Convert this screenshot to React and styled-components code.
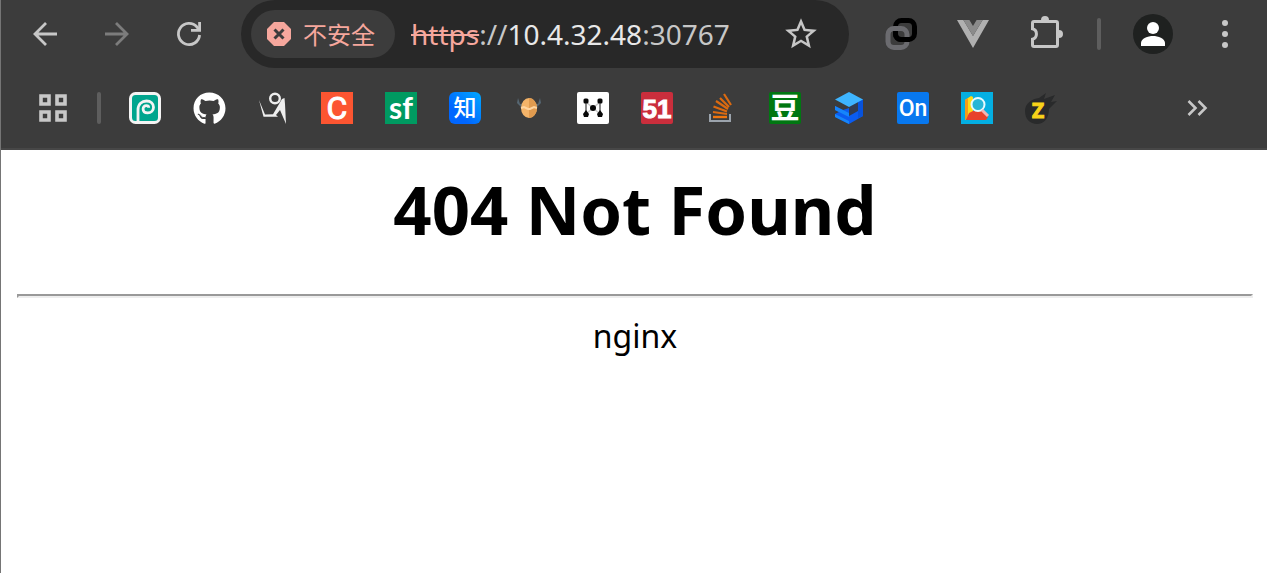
import React from 'react';
import styled, { createGlobalStyle } from 'styled-components';
import { MdStarBorder } from 'react-icons/md';
import { FaGithub } from 'react-icons/fa';

const GlobalStyle = createGlobalStyle`
  * {
    box-sizing: border-box;
  }
  body {
    margin: 0;
    background: #fff;
    font-family: "Noto Sans", "Noto Sans CJK SC", sans-serif;
  }
`;

const Window = styled.div`
  min-height: 100vh;
  border-left: 1px solid #757575;
`;

const Chrome = styled.header`
  background: #3c3c3c;
  border-bottom: 2px solid #474747;
`;

const NavRow = styled.nav`
  display: flex;
  align-items: center;
  height: 68px;
  padding: 0 6px 0 8px;
`;

const BookmarkRow = styled.nav`
  display: flex;
  align-items: center;
  height: 80px;
  padding: 0 38px 0 20px;
`;

const IconButton = styled.button`
  display: flex;
  flex: none;
  align-items: center;
  justify-content: center;
  width: ${({ $small }) => ($small ? '64px' : '72px')};
  height: 64px;
  padding: 0;
  border: 0;
  background: none;
  color: ${({ $muted }) => ($muted ? '#7c7c7c' : '#c7c7c7')};
`;

const Divider = styled.span`
  flex: none;
  width: 4px;
  height: 32px;
  margin: 0 ${({ $gap }) => $gap};
  border-radius: 2px;
  background: #5e5e5e;
`;

const AddressBar = styled.div`
  display: flex;
  flex: 1;
  align-items: center;
  min-width: 0;
  height: 68px;
  margin: 0 16px;
  padding: 0 16px 0 10px;
  border-radius: 34px;
  background: #282828;
`;

const SecurityChip = styled.button`
  display: flex;
  flex: none;
  align-items: center;
  gap: 12px;
  height: 48px;
  padding: 0 20px 0 16px;
  border: 0;
  border-radius: 24px;
  background: #3c3c3c;
  color: #f6a79d;
  font-family: "Noto Sans CJK SC", sans-serif;
  font-size: 24px;
  line-height: 32px;
`;

const Address = styled.label`
  display: flex;
  flex: 1;
  align-items: center;
  min-width: 0;
  margin-left: 16px;
  color: #c7c7c7;
  font-size: 28px;
  line-height: 40px;
  white-space: nowrap;
`;

const Scheme = styled.s`
  color: #f6a79d;
`;

const HostInput = styled.input`
  field-sizing: content;
  padding: 0;
  border: 0;
  outline: 0;
  background: none;
  color: #e8e8e8;
  font: inherit;
`;

const Bookmark = styled.a`
  display: flex;
  flex: none;
  align-items: center;
  justify-content: center;
  width: 64px;
  height: 64px;
  text-decoration: none;
`;

const Spacer = styled.span`
  flex: 1;
`;

const Page = styled.main`
  padding: 16px 14px 16px 16px;
  color: #000;
  text-align: center;
`;

const Title = styled.h1`
  margin: 0 0 42px;
  font-size: 67px;
  line-height: 86px;
`;

const Rule = styled.hr`
  margin: 0 0 16px;
  border: 2px solid;
  border-color: #999 #eee #eee #999;
`;

const Server = styled.p`
  margin: 0;
  font-size: 32px;
  line-height: 44px;
`;

const Drawing = styled.svg`
  display: block;
  flex: none;
  overflow: visible;
`;

const Svg = ({ size = 32, children }) => (
  <Drawing width={size} height={size} viewBox={`0 0 ${size} ${size}`} fill="none" aria-hidden="true">
    {children}
  </Drawing>
);

const BackIcon = () => (
  <Svg size={24}>
    <path d="M24 12H2M13 1L2 12l11 11" stroke="currentColor" strokeWidth="2.8" />
  </Svg>
);

const ForwardIcon = () => (
  <Svg size={24}>
    <path d="M0 12h22M11 1l11 11-11 11" stroke="currentColor" strokeWidth="2.8" />
  </Svg>
);

const ReloadIcon = () => (
  <Svg size={24}>
    <path d="M22.6 13A10.6 10.6 0 1 1 20 5l2 3" stroke="currentColor" strokeWidth="2.8" />
    <path d="M22.6 0v8.4H14" stroke="currentColor" strokeWidth="2.8" />
  </Svg>
);

const DangerIcon = () => (
  <Svg size={24}>
    <path d="M7 0h10l7 7v10l-7 7H7l-7-7V7z" fill="#f6a79d" />
    <path d="M7.5 7.5l9 9M16.5 7.5l-9 9" stroke="#3c3c3c" strokeWidth="3" />
  </Svg>
);

const LinksIcon = () => (
  <Svg>
    <rect x="10.5" y="2.5" width="19" height="19" rx="6" stroke="#000" strokeWidth="5" />
    <rect x="3" y="10.5" width="19" height="19" rx="6" stroke="#6b6b6f" strokeWidth="5" />
    <path d="M10.5 13.5v3a5 5 0 0 0 5 5H25" stroke="#000" strokeWidth="5" />
  </Svg>
);

const VueIcon = () => (
  <Svg>
    <path d="M0 2h6.4L16 18l9.6-16H32L16 30z" fill="#b0b0b0" />
    <path d="M6.4 2h6L16 8l3.6-6h6L16 18z" fill="#8b8b8b" />
  </Svg>
);

const PuzzleIcon = () => (
  <Svg size={36}>
    <path
      d="M7 5.5h22a1.5 1.5 0 0 1 1.5 1.5v22a1.5 1.5 0 0 1-1.5 1.500H7A1.5 1.5 0 0 1 5.500 29v-5.800a5.400 5.400 0 0 0 0-10.400V7A1.5 1.5 0 0 1 7 5.500z"
      stroke="currentColor"
      strokeWidth="3"
    />
    <path d="M14 5V4a4 4 0 0 1 8 0v1zM31 14h1a4 4 0 0 1 0 8h-1z" fill="currentColor" />
  </Svg>
);

const ProfileIcon = () => (
  <Svg size={40}>
    <circle cx="20" cy="20" r="20" fill="#1f2120" />
    <circle cx="20" cy="14" r="6" fill="#fff" />
    <path d="M8 32v-3c0-4.500 7-7 12-7s12 2.500 12 7v3z" fill="#fff" />
  </Svg>
);

const MoreIcon = () => (
  <Svg>
    <g fill="currentColor">
      <circle cx="16" cy="5" r="3" />
      <circle cx="16" cy="16" r="3" />
      <circle cx="16" cy="27" r="3" />
    </g>
  </Svg>
);

const AppsIcon = () => (
  <Svg>
    <path
      d="M4 4h8v8H4zM20 4h8v8h-8zM4 20h8v8H4zM20 20h8v8h-8z"
      stroke="currentColor"
      strokeWidth="3.6"
    />
  </Svg>
);

const OverflowIcon = () => (
  <Svg size={20}>
    <path d="M1.5 3l7 7-7 7M11.5 3l7 7-7 7" stroke="currentColor" strokeWidth="2.6" />
  </Svg>
);

const PhotopeaLogo = () => (
  <Svg>
    <rect x="1.5" y="1.5" width="29" height="29" rx="5" fill="#00a58e" stroke="#f4f4f4" strokeWidth="3" />
    <path
      d="M9 29V18c0-6 4-9 8.500-9 4.200 0 7 2.800 7 6.200 0 3.200-2.500 5.600-5.800 5.600-2.800 0-4.600-1.600-4.600-3.900 0-2 1.500-3.200 3.200-3.200 1.500 0 2.400.9 2.400 2"
      stroke="#f4f4f4"
      strokeWidth="2.8"
    />
  </Svg>
);

const FigureLogo = () => (
  <Svg>
    <circle cx="18" cy="6.5" r="4.8" stroke="#eee" strokeWidth="2.4" />
    <path d="M2 8l6 14.5 8-.2L25 7l2.500-1 .5 6 1 20-6-14-4 5 2 1.800H6.500z" fill="#eee" />
  </Svg>
);

const CLogo = () => (
  <Svg>
    <rect width="32" height="32" fill="#fc5531" />
    <text x="16" y="27" fill="#fff" stroke="#fff" strokeWidth="1" fontSize="32" fontFamily="Roboto, sans-serif" textAnchor="middle">
      C
    </text>
  </Svg>
);

const SfLogo = () => (
  <Svg>
    <rect width="32" height="32" fill="#009a61" />
    <text x="16" y="27" fill="#fff" fontSize="30" fontWeight="700" fontFamily="Lato, sans-serif" textAnchor="middle">
      sf
    </text>
  </Svg>
);

const ZhihuLogo = () => (
  <Svg>
    <defs>
      <linearGradient id="zhihu" x1="0" y1="1" x2="1" y2="0">
        <stop offset="0.3" stopColor="#0066ff" />
        <stop offset="1" stopColor="#00a8ff" />
      </linearGradient>
    </defs>
    <rect width="32" height="32" rx="6" fill="url(#zhihu)" />
    <text x="16" y="24" fill="#fff" fontSize="23" fontWeight="500" fontFamily="Noto Sans CJK SC, sans-serif" textAnchor="middle">
      知
    </text>
  </Svg>
);

const EggLogo = () => (
  <Svg>
    <path d="M5 6l2 6 5-1v4H8L4 11zM27 6l-2 6-5-1v4h4l4-4z" fill="#566773" />
    <ellipse cx="16" cy="16" rx="8" ry="10" fill="#f4b469" />
    <path d="M16 6c4.400 0 8 5 8 10s-3.600 10-8 10z" fill="#e09b4f" />
    <path d="M8 16l3-1 4 2h2l4-2 3 1" stroke="#ffd5a0" strokeWidth="2" />
  </Svg>
);

const NodesLogo = () => (
  <Svg>
    <rect width="32" height="32" rx="2" fill="#fff" />
    <path d="M9 9v14M23 9v14" stroke="#8a8a8a" strokeWidth="2" />
    <path d="M9 10l7 6 7-6M9 22l7-6 7 6" stroke="#ccc" strokeWidth="1.500" />
    <g fill="#080808">
      <rect x="6.500" y="6.500" width="5" height="5" rx="1.500" />
      <rect x="20.500" y="6.500" width="5" height="5" rx="1.500" />
      <circle cx="16" cy="16" r="3" />
      <path d="M9 18l3 4-1 3H7l-1-3zM23 18l3 4-1 3h-4l-1-3z" />
    </g>
  </Svg>
);

const FiftyOneLogo = () => (
  <Svg>
    <rect width="32" height="32" rx="2" fill="#ca2e3c" />
    <text
      x="16"
      y="26"
      fill="#fff"
      stroke="#fff"
      strokeWidth="1"
      fontSize="26"
      fontWeight="700"
      fontFamily="Liberation Sans Narrow, Liberation Sans, sans-serif"
      textAnchor="middle"
    >
      51
    </text>
  </Svg>
);

const StackLogo = () => (
  <Svg>
    <path d="M5 22v7h20v-7" stroke="#9ba3ac" strokeWidth="2" />
    <path d="M8 25h14" stroke="#f0750d" strokeWidth="2.4" />
    <path d="M8 20l14 2M8.500 14.500l13.500 5M11 9l12 8M15 6l9 9M19 2l7 11" stroke="#dc6a10" strokeWidth="2.2" />
  </Svg>
);

const DoubanLogo = () => (
  <Svg>
    <rect width="32" height="32" rx="2" fill="#007711" />
    <text x="16" y="27" fill="#fff" fontSize="29" fontWeight="700" fontFamily="Noto Sans CJK SC, sans-serif" textAnchor="middle">
      豆
    </text>
  </Svg>
);

const CubeLogo = () => (
  <Svg>
    <path d="M2 14l8 4 6-2v6l6-2 2-8 6-4v16l-14 8-14-7v-3l4-2-4-2z" fill="#0b5cf0" />
    <path d="M2 14l14 7v4L2 18zM2 22l14 7v3L2 25z" fill="#1685fa" />
    <path d="M16 15l9-5v9l-9 5z" fill="#323c50" />
    <path d="M25 9l5-2v17l-5 2z" fill="#0752dc" />
    <path d="M16 0l14 7.500L16 15 2 7.500z" fill="#3eb5ff" />
  </Svg>
);

const OnLogo = () => (
  <Svg>
    <rect width="32" height="32" rx="2" fill="#0878ef" />
    <text x="16" y="24" fill="#fff" fontSize="23" fontWeight="500" fontFamily="Roboto, sans-serif" textAnchor="middle">
      On
    </text>
  </Svg>
);

const BookLogo = () => (
  <Svg>
    <rect width="32" height="32" fill="#04afe2" />
    <path d="M4 8l6-4 2 1v15l-8 8z" fill="#ffdb19" />
    <path d="M4 8l3-2v20l-3 2z" fill="#f79b18" />
    <path d="M8 21l4-2h10l5 6-2 3H5z" fill="#e8422c" />
    <circle cx="17" cy="12.500" r="6.500" fill="#28b6d6" stroke="#e4faff" strokeWidth="2" />
    <path d="M21 18l6 6" stroke="#f1b5b5" strokeWidth="3" />
  </Svg>
);

const CometLogo = () => (
  <Svg>
    <path d="M0 19C0 11 7 7 14 6l7-5-2 6 11-4-4 7 6-1-8 8c0 9-5 15-12 15S0 27 0 19z" fill="#292a2b" />
    <text
      x="13"
      y="26"
      fill="#f9d319"
      stroke="#f9d319"
      strokeWidth="1"
      fontSize="21"
      fontWeight="700"
      fontFamily="Open Sans, sans-serif"
      textAnchor="middle"
    >
      Z
    </text>
  </Svg>
);

const bookmarks = [
  { label: 'Photopea', icon: <PhotopeaLogo /> },
  { label: 'GitHub', icon: <FaGithub size={33} color="#fff" /> },
  { label: 'Design', icon: <FigureLogo /> },
  { label: 'CSDN', icon: <CLogo /> },
  { label: 'SegmentFault', icon: <SfLogo /> },
  { label: 'Zhihu', icon: <ZhihuLogo /> },
  { label: 'Egg', icon: <EggLogo /> },
  { label: 'Nodes', icon: <NodesLogo /> },
  { label: '51CTO', icon: <FiftyOneLogo /> },
  { label: 'Stack Overflow', icon: <StackLogo /> },
  { label: 'Douban', icon: <DoubanLogo /> },
  { label: 'Cube', icon: <CubeLogo /> },
  { label: 'On', icon: <OnLogo /> },
  { label: 'Book search', icon: <BookLogo /> },
  { label: 'Comet', icon: <CometLogo /> },
];

const Toolbar = () => (
  <NavRow aria-label="Toolbar">
    <IconButton type="button" aria-label="Back"><BackIcon /></IconButton>
    <IconButton type="button" aria-label="Forward" $muted><ForwardIcon /></IconButton>
    <IconButton type="button" aria-label="Reload"><ReloadIcon /></IconButton>
    <AddressBar>
      <SecurityChip type="button">
        <DangerIcon />
        不安全
      </SecurityChip>
      <Address>
        <Scheme>https</Scheme>
        <span>://</span>
        <HostInput type="text" size={10} defaultValue="10.4.32.48" aria-label="Address" />
        <span>:30767</span>
      </Address>
      <IconButton type="button" aria-label="Bookmark this page" $small>
        <MdStarBorder size={38} />
      </IconButton>
    </AddressBar>
    <IconButton type="button" aria-label="Links"><LinksIcon /></IconButton>
    <IconButton type="button" aria-label="Vue devtools"><VueIcon /></IconButton>
    <IconButton type="button" aria-label="Extensions"><PuzzleIcon /></IconButton>
    <Divider $gap="16px" />
    <IconButton type="button" aria-label="Profile"><ProfileIcon /></IconButton>
    <IconButton type="button" aria-label="Menu"><MoreIcon /></IconButton>
  </NavRow>
);

const Bookmarks = ({ items }) => (
  <BookmarkRow aria-label="Bookmarks">
    <IconButton type="button" aria-label="Tab groups" $small><AppsIcon /></IconButton>
    <Divider $gap="12px" />
    {items.map(({ label, icon }) => (
      <Bookmark key={label} href="#" aria-label={label}>{icon}</Bookmark>
    ))}
    <Spacer />
    <IconButton type="button" aria-label="More bookmarks" $small><OverflowIcon /></IconButton>
  </BookmarkRow>
);

const App = () => (
  <Window>
    <GlobalStyle />
    <Chrome>
      <Toolbar />
      <Bookmarks items={bookmarks} />
    </Chrome>
    <Page>
      <Title>404 Not Found</Title>
      <Rule />
      <Server>nginx</Server>
    </Page>
  </Window>
);

export default App;
